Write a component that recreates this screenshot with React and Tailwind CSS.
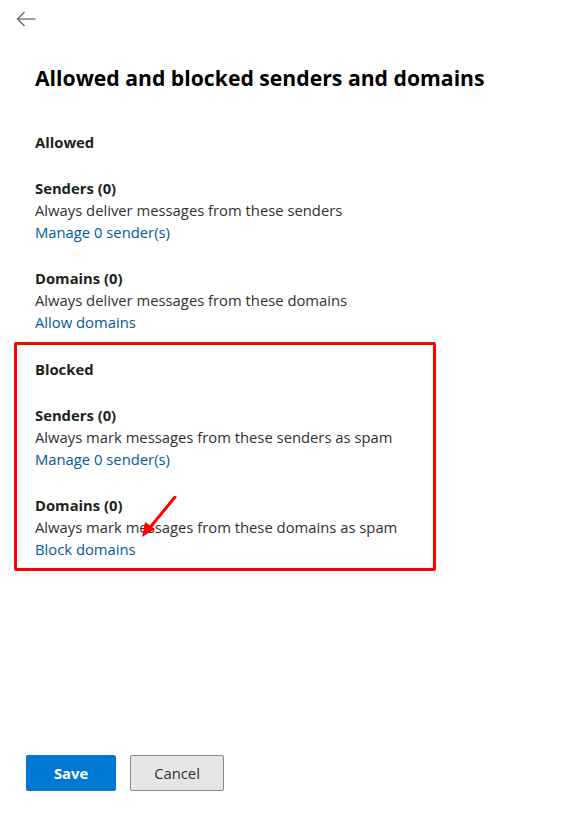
import React from "react";

function Item({ title, desc, link }) {
  return (
    <div className="mt-6">
      <div className="font-bold text-[#201f1e] leading-[22px]">{title}</div>
      <div className="text-[#323130] leading-[22px]">{desc}</div>
      <div className="text-[#005a9e] leading-[22px]">{link}</div>
    </div>
  );
}

export default function App() {
  return (
    <div
      className="w-[579px] h-[821px] bg-white relative flex flex-col text-[14.8px]"
      style={{ fontFamily: '"Open Sans", "Noto Sans", sans-serif' }}
    >
      <div className="pl-[16px] pt-[11px] h-[36px]">
        <svg width="20" height="16" viewBox="0 0 20 16" fill="none" stroke="#605e5c" strokeWidth="1.2">
          <path d="M1.5 8H19.5" />
          <path d="M8.5 1L1.5 8L8.5 15" />
        </svg>
      </div>
      <div className="px-[35px] flex-1">
        <h1 className="mt-[28px] text-[21.2px] font-bold text-black leading-[28px]">
          Allowed and blocked senders and domains
        </h1>
        <div className="mt-[39px] font-bold text-[#201f1e] leading-[22px]">Allowed</div>
        <Item title="Senders (0)" desc="Always deliver messages from these senders" link="Manage 0 sender(s)" />
        <Item title="Domains (0)" desc="Always deliver messages from these domains" link="Allow domains" />
        <div className="relative mt-[25px]">
          <div className="font-bold text-[#201f1e] leading-[22px]">Blocked</div>
          <Item title="Senders (0)" desc="Always mark messages from these senders as spam" link="Manage 0 sender(s)" />
          <Item title="Domains (0)" desc="Always mark messages from these domains as spam" link="Block domains" />
          <div className="absolute left-[-21px] top-[-16px] w-[422px] h-[229px] border-[3px] border-[#ff0000] rounded-[2px] pointer-events-none" />
          <svg className="absolute left-[103px] top-[138px]" width="40" height="42" viewBox="0 0 40 42">
            <path d="M37 1L10 34" stroke="#ff0000" strokeWidth="3" strokeLinecap="round" />
            <path d="M4 41L7 26L17 33Z" fill="#ff0000" />
          </svg>
        </div>
      </div>
      <div className="flex gap-[14px] pl-[26px] pb-[30px]">
        <button className="w-[90px] h-[36px] bg-[#0078d4] text-white font-bold rounded-[2px]">Save</button>
        <button className="w-[94px] h-[36px] bg-[#e6e6e6] border border-[#8a8886] text-[#323130] rounded-[2px]">Cancel</button>
      </div>
    </div>
  );
}
